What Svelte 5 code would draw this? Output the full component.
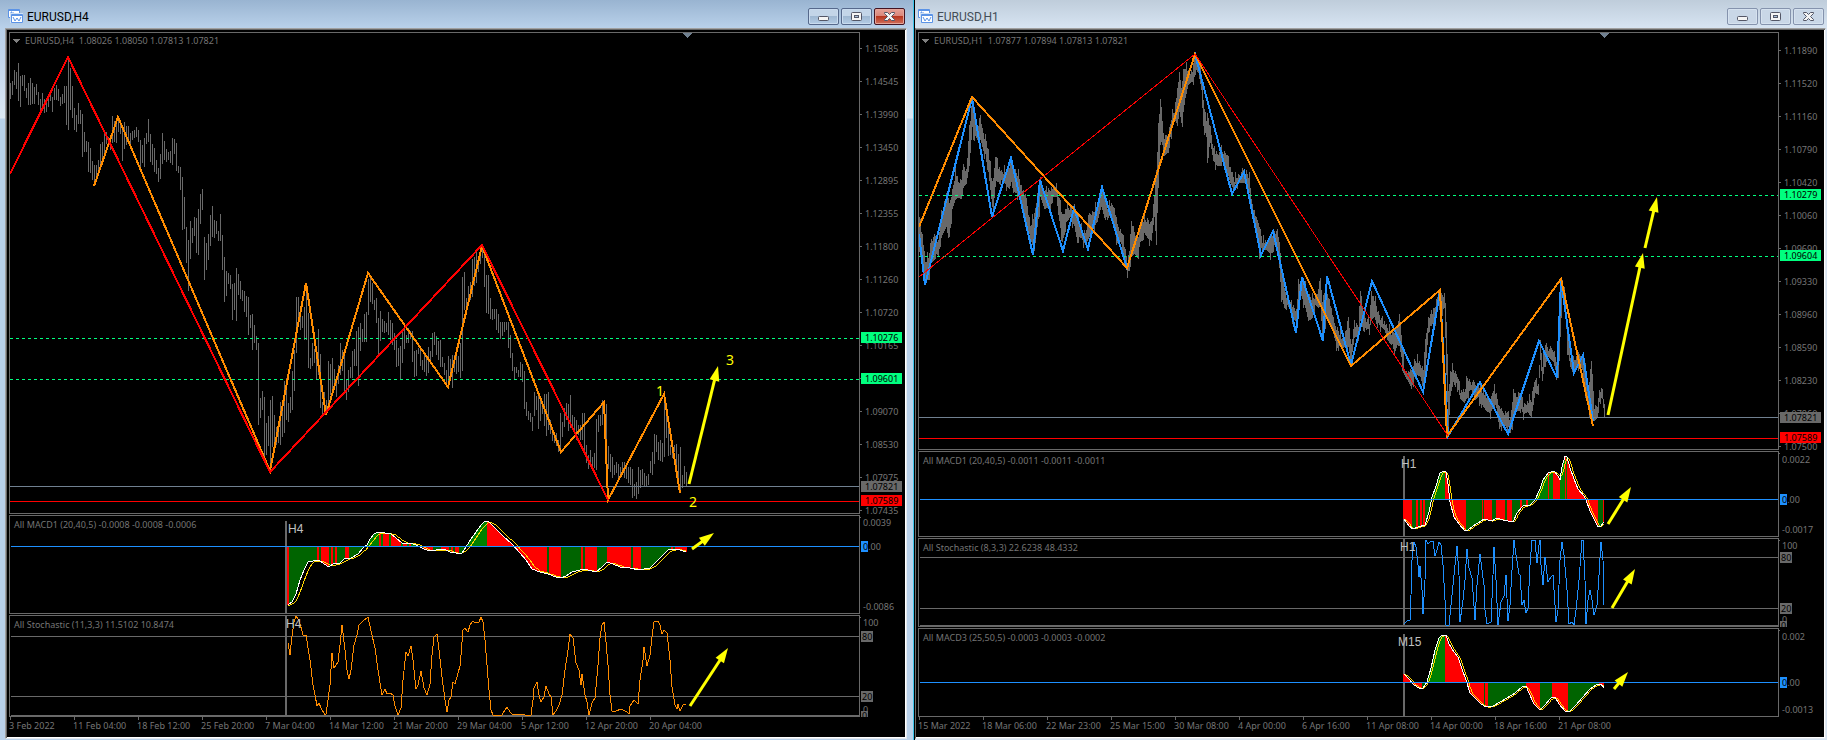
<script lang="ts">
  type Point = [number, number]
  type Level = { y: number; kind: 'target' | 'bid' | 'stop'; boxY: number; text: string }
  type Arrow = [number, number, number, number]

  const DIM = '#696969'
  const ORANGE = '#ff8c00'
  const BLUE = '#1e90ff'

  const nums = (s: string) => s.trim().split(/[\s,]+/).map(Number)

  const pairs = (s: string): Point[] => {
    const n = nums(s)
    const out: Point[] = []
    for (let i = 0; i < n.length; i += 2) out.push([n[i], n[i + 1]])
    return out
  }

  const join = (pts: Point[]) => pts.map(p => p.join(',')).join(' ')

  // value of a polyline at x
  const valueAt = (pts: Point[], x: number) => {
    if (x <= pts[0][0]) return pts[0][1]
    for (let i = 1; i < pts.length; i++) {
      const [x1, y1] = pts[i]
      const [x0, y0] = pts[i - 1]
      if (x <= x1) return y0 + ((y1 - y0) * (x - x0)) / (x1 - x0)
    }
    return pts[pts.length - 1][1]
  }

  const bar = (x: number, top: number, bottom: number, w = 1) =>
    `M${x} ${top}h${w}V${bottom}h${-w}z`

  // H4 ranges, one high/low pair for every second pixel
  const h4Ranges = pairs(`
    83,99 81,95 70,85 72,89 63,101 76,107 75,86 75,91 88,98 83,105 78,105 83,104 87,104 84,95 92,105
    99,115 93,110 99,113 98,112 96,107 93,101 97,112 88,100 85,100 89,101 97,106 94,104 86,103 86,125 59,130
    68,110 86,118 108,130 115,132 103,124 110,124 114,157 132,152 141,152 142,172 148,173 161,180 165,185 165,182 160,174
    144,168 142,162 133,159 132,144 137,146 135,150 116,143 121,142 120,143 117,132 122,134 125,161 122,149 126,145 126,142
    133,144 131,140 130,138 127,137 130,142 140,167 145,163 138,167 133,144 119,142 134,162 144,165 148,172 160,174 168,182
    154,179 133,164 141,160 149,162 152,160 151,163 138,165 139,154 143,171 166,173 167,190 177,230 197,229 227,263 240,291
    221,259 228,243 217,236 218,253 209,255 194,224 189,210 237,280 243,270 234,260 215,246 206,237 220,238 221,234 231,241
    214,241 235,270 257,302 271,296 273,284 275,289 284,320 283,310 268,321 274,295 281,299 290,301 291,312 296,317 297,335
    315,328 314,350 325,343 336,350 343,425 398,418 391,410 397,463 423,455 416,446 400,470 396,447 415,445 427,445 424,443
    402,445 400,437 381,433 378,420 403,422 397,413 371,410 350,391 297,353 297,318 308,330 316,328 307,340 290,340 313,368
    358,369 343,366 349,363 353,380 329,375 354,408 402,415 392,415 400,415 361,405 364,395 358,392 369,385 378,397 365,384
    343,375 350,371 354,393 379,400 370,392 367,378 351,378 349,366 331,366 327,386 323,351 329,342 314,342 312,342 279,315
    277,302 283,304 300,310 298,323 318,354 311,341 319,332 321,333 323,332 312,335 320,340 323,345 333,350 340,367 348,366
    346,379 330,363 328,349 335,343 328,343 331,339 331,362 351,377 350,376 348,354 350,366 360,370 355,372 357,376 347,373
    351,362 333,357 332,345 336,355 341,360 340,367 357,367 363,375 370,384 356,384 359,380 355,388 355,372 350,374 356,372
    343,378 277,371 272,310 298,306 286,302 282,300 259,297 257,286 252,283 260,272 245,264 244,258 248,287 275,313 275,314
    298,319 309,320 309,319 309,330 314,333 322,339 322,336 322,332 322,330 322,348 335,358 353,371 367,380 367,373 370,377
    362,377 364,382 371,409 402,416 411,420 413,422 417,431 392,416 396,410 394,429 398,421 402,414 394,426 394,436 392,430
    420,434 430,441 436,443 433,446 440,452 413,452 422,437 408,427 403,420 404,431 395,428 415,427 417,430 420,440 425,435
    425,440 413,440 413,455 445,463 455,469 450,464 457,469 453,468 419,470 415,432 415,426 400,425 402,428 404,440 446,469
    454,472 457,478 465,475 462,473 464,478 467,474 462,475 462,478 466,479 467,483 467,485 469,498 484,496 482,499 467,494
    470,488 469,485 473,487 476,486 474,485 461,473 452,475 434,464 435,452 442,460 440,461 443,462 395,457 412,438 420,456
    445,455 448,458 445,452 444,475 454,488 447,490 475,488 466,484 472,487`)

  const h4Bars = h4Ranges.map(([hi, lo], i) => bar(10 + i * 2, hi, lo)).join('')

  // H1 envelope: x, high, low
  const h1Env = nums(`
    919 218 250 922 235 262 925 262 284 928 258 280 931 238 262 935 238 256 938 242 258 940 222 242 943 205 232 946 195 225
    949 205 240 952 190 210 955 172 200 958 182 196 961 180 196 963 165 190 966 170 185 969 130 165 972 97 125 974 120 138
    977 130 142 980 115 140 983 138 150 985 135 152 988 150 175 991 178 200 993 180 215 995 155 180 998 166 180 1001 172 183
    1005 172 185 1009 165 188 1011 160 180 1014 170 195 1018 175 195 1022 190 208 1026 200 225 1030 225 240 1034 215 250
    1037 195 225 1040 178 200 1044 193 210 1048 190 206 1052 188 200 1056 185 198 1058 195 215 1062 215 240 1066 208 225
    1070 208 218 1074 208 225 1077 215 240 1081 230 240 1085 232 245 1089 215 235 1093 212 230 1097 205 222 1101 188 205
    1104 195 215 1107 208 222 1110 205 215 1113 205 225 1117 225 240 1121 232 245 1124 245 265 1127 262 270 1129 250 268
    1131 222 260 1134 232 255 1137 240 258 1140 225 240 1144 220 236 1148 220 240 1151 225 240 1154 195 215 1156 170 242
    1158 130 190 1160 97 140 1162 120 145 1164 140 155 1168 135 150 1171 118 135 1174 110 120 1177 90 125 1179 75 110
    1181 88 120 1183 70 115 1185 66 100 1188 72 85 1192 72 80 1195 53 72 1198 60 75 1201 72 90 1203 100 125 1206 120 135
    1207 115 160 1210 128 145 1213 150 162 1217 153 165 1222 152 162 1226 153 170 1230 168 182 1234 180 188 1238 175 184
    1242 172 182 1246 172 180 1249 178 195 1252 205 220 1256 220 235 1259 225 250 1262 240 252 1266 243 250 1270 238 252
    1274 232 248 1278 235 255 1281 262 295 1284 290 306 1288 303 308 1292 305 318 1296 310 320 1298 286 310 1301 280 298
    1305 285 308 1308 295 320 1312 300 315 1315 295 307 1318 290 308 1320 280 305 1322 300 335 1325 290 320 1328 295 325
    1331 310 325 1334 325 337 1338 330 348 1342 340 350 1346 330 345 1348 318 345 1351 345 362 1354 325 340 1358 325 335
    1360 290 320 1363 315 328 1366 320 332 1369 322 330 1371 290 320 1374 300 315 1377 310 325 1380 318 328 1384 322 330
    1387 328 338 1391 333 342 1394 330 355 1397 330 345 1399 312 345 1401 335 355 1404 370 378 1408 373 383 1411 372 388
    1414 360 375 1417 360 378 1420 365 378 1423 370 390 1425 340 370 1428 318 330 1431 315 328 1435 305 320 1438 292 305
    1441 295 315 1444 295 310 1446 320 370 1448 390 435 1450 372 395 1453 370 380 1457 375 388 1460 390 400 1464 392 402
    1467 378 395 1471 382 392 1475 385 400 1478 385 395 1482 390 408 1486 398 412 1490 402 412 1493 388 405 1496 395 410
    1499 408 430 1502 412 422 1506 412 425 1510 420 435 1513 390 420 1516 398 410 1519 393 408 1523 405 416 1527 402 412
    1531 400 415 1534 380 395 1538 385 396 1540 342 360 1542 365 380 1545 343 358 1549 350 360 1553 350 362 1556 360 372
    1558 350 375 1560 300 340 1562 282 300 1565 295 310 1567 330 348 1570 355 365 1574 360 372 1578 355 365 1582 355 368
    1585 368 395 1588 390 410 1591 360 420 1594 408 420 1597 405 415 1600 390 400 1602 388 400 1604 405 418`)

  const highs: Point[] = []
  const lows: Point[] = []
  for (let i = 0; i < h1Env.length; i += 3) {
    highs.push([h1Env[i], h1Env[i + 1]])
    lows.push([h1Env[i], h1Env[i + 2]])
  }

  let h1Bars = ''
  for (let x = 919; x <= 1604; x++) {
    const a = ((x * 37) % 11) - 5
    const b = ((x * 53) % 13) - 6
    const wick = x % 7 === 3 ? 5 : 0
    const tail = x % 11 === 5 ? 6 : 0
    const hi = Math.round(valueAt(highs, x) + a / 2) - wick
    const lo = Math.max(hi + 4, Math.round(valueAt(lows, x) + b / 2)) + tail
    h1Bars += bar(x, Math.max(hi, 53), Math.min(lo, 436))
  }

  // histogram with the falling stretches in red, plus a 5 bar signal line
  function macd(line: string, zero: number, step: number, reds: string) {
    const main = pairs(line)
    const red = pairs(reds)
    const end = main[main.length - 1][0]
    const out = { main: join(main), signal: '', red: '', up: '', down: '' }
    const signal: Point[] = []
    for (let x = main[0][0]; x <= end; x += step) {
      const y = Math.round(valueAt(main, x))
      const path = bar(x - 1, Math.min(y, zero), Math.max(y, zero), step)
      if (red.some(([a, b]) => x >= a && x < b)) out.red += path
      else if (y < zero) out.up += path
      else out.down += path
      let sum = 0
      for (let k = 0; k < 5; k++) sum += valueAt(main, x - k * step)
      signal.push([x, Math.round(sum / 5)])
    }
    out.signal = join(signal)
    return out
  }

  const h4Macd = macd(
    `288,605 292,602 296,594 300,580 304,570 308,562 313,561 319,560 324,564 329,567 333,564 340,563 344,559 351,558
    358,554 363,548 367,545 370,539 374,534 378,532 385,533 391,534 396,538 402,543 411,543 418,546 424,549 430,551
    436,550 444,549 450,552 456,553 462,553 466,547 471,539 476,532 481,525 485,521 489,522 495,528 503,536 512,544
    520,553 526,560 532,569 540,572 548,574 556,577 561,578 566,576 572,572 584,569 596,572 602,567 607,562 613,564
    620,567 630,568 639,570 650,568 656,562 662,556 668,550 676,549 680,550 686,552`,
    546,
    2,
    `286,289 317,319 321,329 331,333 335,337 345,349 379,381 383,389 391,402 404,407 409,412 423,433 441,449 451,453
    455,460 488,547 549,562 581,583 585,597 607,631 633,642 671,673 676,689`
  )

  const h1Macd = macd(
    `1404,519 1409,526 1413,529 1418,527 1425,525 1429,512 1432,497 1436,486 1440,473 1444,471 1446,472 1448,484
    1450,502 1454,517 1459,524 1465,531 1468,530 1473,526 1478,523 1484,519 1492,521 1497,518 1503,520 1508,521
    1513,522 1517,513 1523,506 1530,505 1535,500 1540,489 1543,480 1548,473 1554,471 1558,476 1560,480 1562,467
    1565,456 1567,457 1570,468 1574,479 1578,489 1584,496 1586,500 1590,511 1595,521 1598,527 1601,526 1604,522`,
    499,
    1,
    `1404,1413 1417,1419 1421,1423 1424,1426 1446,1467 1483,1484 1485,1493 1497,1506 1508,1513 1521,1523 1527,1529
    1549,1550 1554,1561 1566,1567 1568,1599 1604,1606`
  )

  const m15Macd = macd(
    `1404,674 1409,679 1414,685 1419,688 1423,688 1427,682 1431,668 1435,650 1439,638 1442,635 1446,635 1449,644
    1454,652 1458,657 1462,669 1466,680 1470,693 1475,698 1481,704 1486,707 1493,706 1500,702 1507,698 1515,693
    1522,687 1526,686 1529,693 1534,704 1540,710 1545,705 1551,698 1555,697 1559,704 1565,711 1570,711 1576,705
    1583,697 1590,689 1596,685 1601,684 1604,688`,
    682,
    1,
    '1404,1412 1414,1423 1446,1485 1486,1489 1527,1541 1553,1569 1600,1606'
  )

  const h4Stoch = `288,643 290,655 292,636 294,622 296,616 299,620 303,635 306,635 310,660 313,685 315,695 317,706 319,703
    321,708 325,715 326,714 328,700 330,685 332,653 334,668 338,662 340,645 342,625 345,650 347,670 349,679 351,670
    354,645 357,635 359,625 363,621 368,617 371,631 375,648 378,670 382,695 385,689 387,694 390,693 393,695 395,706
    398,715 401,708 403,680 406,652 408,656 411,646 413,660 416,689 418,685 421,671 424,688 427,695 430,684 432,655
    434,637 437,634 439,650 442,677 445,700 447,712 449,700 451,697 453,682 455,684 458,673 460,666 461,655 463,630
    465,628 468,632 470,625 473,621 475,623 479,622 481,617 483,622 485,640 487,665 489,690 491,710 493,715 502,715
    505,710 507,707 510,712 513,715 521,714 525,715 531,715 533,700 534,688 537,682 539,695 541,702 544,697 546,686
    549,694 551,697 553,715 556,711 559,705 562,695 565,670 568,650 570,634 573,638 576,663 579,670 581,685 582,674
    585,695 587,702 589,715 592,703 595,698 598,665 600,638 602,625 604,622 606,642 608,665 610,695 612,711 616,711
    621,709 627,712 629,714 630,706 634,700 638,704 640,680 643,660 644,647 647,666 650,655 652,637 654,622 658,621
    660,625 662,634 664,630 667,633 670,660 672,687 675,705 677,709 678,704 680,711 683,705 686,704`

  const h1Stoch = `1404,624 1407,621 1410,620 1411,595 1412,560 1414,542 1416,547 1418,565 1419,577 1420,566 1422,590
    1423,614 1425,580 1426,540 1428,544 1431,541 1433,541 1435,556 1437,550 1439,542 1441,545 1443,565 1445,600
    1446,625 1449,625 1451,605 1454,575 1457,546 1459,575 1460,622 1463,600 1465,580 1467,549 1469,568 1472,578
    1475,620 1477,585 1480,554 1482,570 1484,585 1485,610 1487,624 1491,622 1493,575 1494,547 1496,580 1498,625
    1501,602 1504,596 1506,575 1508,621 1510,605 1512,570 1514,540 1516,555 1519,574 1520,575 1522,605 1524,600
    1526,613 1528,608 1530,565 1532,540 1535,540 1537,563 1539,545 1540,540 1541,565 1543,585 1545,557 1548,582
    1551,577 1553,575 1555,605 1556,622 1558,610 1560,560 1562,542 1564,555 1567,590 1569,624 1572,622 1574,625
    1576,610 1579,580 1582,540 1583,540 1585,580 1586,624 1588,600 1590,590 1592,600 1594,615 1597,605 1599,575
    1601,542 1603,560 1604,605`

  const windows = [
    {
      title: 'EURUSD,H4',
      active: true,
      ohlc: '1.08026 1.08050 1.07813 1.07821',
      left: 10,
      shift: 687,
      dates: [
        '3 Feb 2022', '11 Feb 04:00', '18 Feb 12:00', '25 Feb 20:00', '7 Mar 04:00', '14 Mar 12:00',
        '21 Mar 20:00', '29 Mar 04:00', '5 Apr 12:00', '12 Apr 20:00', '20 Apr 04:00',
      ],
      price: {
        top: 32,
        height: 482,
        firstTick: 48,
        ticks: [
          '1.15085', '1.14545', '1.13990', '1.13450', '1.12895', '1.12355', '1.11800', '1.11260',
          '1.10720', '1.10165', '', '1.09070', '1.08530', '1.07975', '1.07435',
        ],
        bars: h4Bars,
        zigzags: [
          {
            color: ORANGE,
            width: 2,
            points: `94,186 118,117 270,471 306,283 326,415 368,273 448,387 482,246 561,452 604,402 608,500 664,394 680,493`,
          },
          { color: '#f00', width: 2, points: '10,174 68,57 270,472 482,245 608,500' },
        ],
        levels: [
          { y: 338, kind: 'target', boxY: 332, text: '1.10276' },
          { y: 379, kind: 'target', boxY: 373, text: '1.09601' },
          { y: 486, kind: 'bid', boxY: 481, text: '1.07821' },
          { y: 501, kind: 'stop', boxY: 495, text: '1.07589' },
        ] as Level[],
        arrows: [[689, 484, 718, 366]] as Arrow[],
        waves: [
          { n: 1, x: 656, y: 396 },
          { n: 2, x: 689, y: 507 },
          { n: 3, x: 726, y: 365 },
        ],
      },
      indicators: [
        {
          top: 515, height: 99, label: 'All MACD1 (20,40,5) -0.0008 -0.0008 -0.0006',
          frame: 'H4', frameX: 288, frameY: 533, start: 285, startY: 521,
          macd: h4Macd, zero: 546, high: ['0.0039', 522], low: ['-0.0086', 607],
          arrow: [692, 549, 714, 533] as Arrow,
        },
        {
          top: 615, height: 102, label: 'All Stochastic (11,3,3) 11.5102 10.8474',
          frame: 'H4', frameX: 286, frameY: 628, start: 285, startY: 616,
          stoch: h4Stoch, color: ORANGE, levels: [636, 696, 715], high: ['100', 622],
          arrow: [690, 706, 728, 648] as Arrow,
        },
      ],
    },
    {
      title: 'EURUSD,H1',
      active: false,
      ohlc: '1.07877 1.07894 1.07813 1.07821',
      left: 919,
      shift: 1604,
      dates: [
        '15 Mar 2022', '18 Mar 06:00', '22 Mar 23:00', '25 Mar 15:00', '30 Mar 08:00', '4 Apr 00:00',
        '6 Apr 16:00', '11 Apr 08:00', '14 Apr 00:00', '18 Apr 16:00', '21 Apr 08:00',
      ],
      price: {
        top: 32,
        height: 418,
        firstTick: 50,
        ticks: [
          '1.11890', '1.11520', '1.11160', '1.10790', '1.10420', '1.10060', '1.09690', '1.09330',
          '1.08960', '1.08590', '1.08230', '1.07860', '1.07500',
        ],
        bars: h1Bars,
        zigzags: [
          {
            color: BLUE,
            width: 2,
            points: `919,234 925,285 972,98 992,217 1011,158 1033,255 1040,180 1063,251 1074,208 1088,249 1102,187
              1127,268 1195,54 1232,194 1244,172 1261,255 1273,231 1296,333 1302,277 1323,341 1327,276 1351,365
              1372,281 1423,392 1440,291 1448,436 1480,382 1508,434 1539,341 1557,378 1561,280 1574,373 1583,355
              1593,421`,
          },
          {
            color: ORANGE,
            width: 2,
            points: `919,227 972,97 1127,268 1195,54 1351,366 1440,290 1447,436 1561,279 1593,426`,
          },
          { color: '#f00', width: 1, points: '919,277 1195,54 1448,436' },
        ],
        levels: [
          { y: 195, kind: 'target', boxY: 189, text: '1.10279' },
          { y: 256, kind: 'target', boxY: 250, text: '1.09604' },
          { y: 417, kind: 'bid', boxY: 412, text: '1.07821' },
          { y: 438, kind: 'stop', boxY: 432, text: '1.07589' },
        ] as Level[],
        arrows: [
          [1608, 415, 1643, 253],
          [1645, 248, 1657, 197],
        ] as Arrow[],
        waves: [],
      },
      indicators: [
        {
          top: 451, height: 86, label: 'All MACD1 (20,40,5) -0.0011 -0.0011 -0.0011',
          frame: 'H1', frameX: 1401, frameY: 468, start: 1403, startY: 456,
          macd: h1Macd, zero: 499, high: ['0.0022', 459], low: ['-0.0017', 530],
          arrow: [1608, 524, 1631, 487] as Arrow,
        },
        {
          top: 538, height: 89, label: 'All Stochastic (8,3,3) 22.6238 48.4332',
          frame: 'H1', frameX: 1400, frameY: 551, start: 1403, startY: 539,
          stoch: h1Stoch, color: BLUE, levels: [557, 608, 625], high: ['100', 545],
          arrow: [1612, 608, 1635, 569] as Arrow,
        },
        {
          top: 628, height: 89, label: 'All MACD3 (25,50,5) -0.0003 -0.0003 -0.0002',
          frame: 'M15', frameX: 1398, frameY: 646, start: 1403, startY: 634,
          macd: m15Macd, zero: 682, high: ['0.002', 636], low: ['-0.0013', 710],
          arrow: [1614, 689, 1628, 672] as Arrow,
        },
      ],
    },
  ]

  // shaft and head of an arrow as two shapes
  function arrowShape([x1, y1, x2, y2]: Arrow) {
    const len = Math.hypot(x2 - x1, y2 - y1)
    const ux = (x2 - x1) / len
    const uy = (y2 - y1) / len
    const bx = x2 - ux * 15
    const by = y2 - uy * 15
    const head = [
      [x2, y2],
      [bx - uy * 5, by + ux * 5],
      [bx + uy * 5, by - ux * 5],
    ]
    return { x1, y1, x2: x2 - ux * 12, y2: y2 - uy * 12, head: head.map(p => p.join(',')).join(' ') }
  }
</script>

{#snippet arrow(a: Arrow)}
  {@const s = arrowShape(a)}
  <line class="shaft" x1={s.x1} y1={s.y1} x2={s.x2} y2={s.y2} />
  <polygon class="head" points={s.head} />
{/snippet}

<main class="workspace">
  {#each windows as w}
    <section class="window" class:active={w.active} aria-label={w.title}>
      <header>
        <svg class="logo" width="15" height="15" viewBox="0 0 15 15" aria-hidden="true">
          <rect x="0" y="0" width="12" height="9" rx="1" fill="#5b93e6" />
          <rect x="1" y="2" width="10" height="6" fill="#fff" />
          <path d="M2 5h1v-2h1v3h1v-2h1" fill="none" stroke="#5b93e6" />
          <rect x="2" y="4" width="13" height="10" fill="#cfe0f5" />
          <rect x="3" y="5" width="12" height="9" rx="1" fill="#5b93e6" />
          <rect x="4" y="7" width="10" height="6" fill="#fff" />
          <path d="M5 8l2 4 2-3 2 3 2-4" fill="none" stroke="#5b93e6" />
        </svg>
        <h1>{w.title}</h1>
        <div class="buttons">
          <button type="button" aria-label="Minimize">
            <svg width="15" height="13" viewBox="0 0 15 13" aria-hidden="true">
              <rect x="2.500" y="6.500" width="10" height="4" rx="1" class="glyph" />
            </svg>
          </button>
          <button type="button" aria-label="Maximize">
            <svg width="15" height="13" viewBox="0 0 15 13" aria-hidden="true">
              <rect x="2.500" y="2.500" width="10" height="8" rx="1" class="glyph" />
              <rect x="5.500" y="5.500" width="4" height="2" class="glyph hole" />
            </svg>
          </button>
          <button type="button" class="close" aria-label="Close">
            <svg width="15" height="13" viewBox="0 0 15 13" aria-hidden="true">
              <path
                class="glyph"
                d="M2.500 2.500h3l2 2 2-2h3v1l-3 3 3 3v1h-3l-2-2-2 2h-3v-1l3-3-3-3z" />
            </svg>
          </button>
        </div>
      </header>

      <div class="client">
        <div class="pane">
          <svg class="plot" height={w.price.height}>
            <g transform="translate({-w.left} {-w.price.top - 1})">
              <path d={w.price.bars} fill={DIM} />
              {#each w.price.levels as l}
                {#if l.kind === 'target'}
                  <line class="target" x1={w.left} x2="300%" y1={l.y + 0.5} y2={l.y + 0.5} />
                {:else}
                  <rect class={l.kind} x={w.left} y={l.y} width="100%" height="1" />
                {/if}
              {/each}
              {#each w.price.zigzags as z}
                <polyline points={z.points} fill="none" stroke={z.color} stroke-width={z.width} />
              {/each}
              <polygon points="{w.shift - 5},33 {w.shift + 5},33 {w.shift},38" fill="#708090" />
              <polygon points="{w.left + 3},39 {w.left + 10},39 {w.left + 6},43" fill="#808080" />
              <text x={w.left + 15} y="44">{w.title}&nbsp; {w.ohlc}</text>
              {#each w.price.arrows as a}
                {@render arrow(a)}
              {/each}
              {#each w.price.waves as wave}
                <text class="wave" x={wave.x} y={wave.y}>{wave.n}</text>
              {/each}
            </g>
          </svg>
          <svg class="scale" height={w.price.height}>
            <g transform="translate(0 {-w.price.top})">
              {#each w.price.ticks as t, i}
                {@const y = w.price.firstTick + i * 33}
                <rect x="0" {y} width="2" height="1" fill={DIM} />
                <text x="5" y={y + 4}>{t}</text>
              {/each}
              {#each w.price.levels as l}
                <rect class={l.kind === 'bid' ? 'dim' : l.kind} x="1" y={l.boxY} width="41" height="11" />
                <text class="on" x="5" y={l.boxY + 9}>{l.text}</text>
              {/each}
            </g>
          </svg>
        </div>

        {#each w.indicators as p}
          <div class="pane">
            <svg class="plot" height={p.height}>
              <g transform="translate({-w.left} {-p.top - 1})">
                <text x={w.left + 4} y={p.top + 13}>{p.label}</text>
                <rect x={p.start} y={p.startY} width="2" height="100%" fill={DIM} />
                {#if p.macd}
                  <path d={p.macd.red} fill="#f00" />
                  <path d={p.macd.up} fill="#008000" />
                  <path d={p.macd.down} fill="#006400" />
                  <polyline class="signal" points={p.macd.signal} />
                  <polyline class="main" points={p.macd.main} />
                  <rect x={w.left + 1} y={p.zero} width="100%" height="1" fill={BLUE} />
                {:else}
                  {#each p.levels as y}
                    <rect x={w.left + 1} {y} width="100%" height="1" fill={DIM} />
                  {/each}
                  <polyline points={p.stoch} fill="none" stroke={p.color} />
                {/if}
                <text class="frame" x={p.frameX} y={p.frameY}>{p.frame}</text>
                {@render arrow(p.arrow)}
              </g>
            </svg>
            <svg class="scale" height={p.height}>
              <g transform="translate(0 {-p.top})">
                <rect x="0" y={p.top + 2} width="1" height="1" fill={DIM} />
                <text x="3" y={Number(p.high[1]) + 4}>{p.high[0]}</text>
                {#if p.macd}
                  <rect x="1" y={p.zero - 5} width="7" height="11" fill={BLUE} />
                  <text x="3" y={p.zero + 4}><tspan class="on">0</tspan>.00</text>
                  <text x="3" y={Number(p.low[1]) + 3}>{p.low[0]}</text>
                {:else}
                  {@const [l80, l20, l0] = p.levels}
                  <rect class="dim" x="1" y={l80 - 5} width="12" height="11" />
                  <text class="on" x="2" y={l80 + 4}>80</text>
                  <rect class="dim" x="1" y={l20 - 5} width="12" height="11" />
                  <text class="on" x="2" y={l20 + 4}>20</text>
                  <text x="3" y={l0 - 2}>0</text>
                  <rect class="dim" x="1" y={l0 - 4} width="7" height="6" />
                  <text class="on" x="2" y={l0 + 4}>0</text>
                {/if}
              </g>
            </svg>
          </div>
        {/each}

        <ol class="dates">
          {#each w.dates as d}
            <li>{d}</li>
          {/each}
        </ol>
      </div>
    </section>
  {/each}
</main>

<style>
  :global(body) {
    margin: 0;
    background: #b9d1ea;
  }

  .workspace {
    display: grid;
    grid-template-columns: 915fr 912fr;
    font-family: 'Noto Sans', 'DejaVu Sans Condensed', sans-serif;
    font-size: 9px;
  }

  .window {
    min-width: 0;
    padding: 0 1px 1px 0;
    background: linear-gradient(#bfcddb, #d7e4f2 28px);
  }

  .window.active {
    padding: 0 7px 1px 5px;
    border-right: 1px solid #000;
    box-shadow: inset -1px 0 #3cc4ea;
    background: linear-gradient(#99b4d1, #b9d1ea 28px, #c3d6ec 60px, #dce9f5 118px, #b9d1ea 119px);
  }

  header {
    display: flex;
    align-items: flex-start;
    height: 28px;
    box-sizing: border-box;
    padding: 8px 2px 0 3px;
  }

  .logo {
    margin-top: 1px;
  }

  h1 {
    flex: 1;
    margin: 0 0 0 4px;
    font: 12px/18px Roboto, sans-serif;
    color: #434d57;
  }

  .active h1 {
    color: #000;
  }

  .buttons {
    display: flex;
    gap: 2px;
  }

  button {
    display: flex;
    align-items: center;
    justify-content: center;
    width: 31px;
    height: 17px;
    padding: 0;
    border: 1px solid #8593ad;
    border-radius: 2px;
    background: #c9d7e7;
    box-shadow: inset 0 0 0 1px #d6e2ef;
  }

  .active button {
    border-color: #56698c;
    background: linear-gradient(#c3d5e8 50%, #9fb8d2 50%, #b4cce5);
    box-shadow: inset 0 0 0 1px #cadcef;
  }

  .active .close {
    border-color: #431422;
    background: linear-gradient(#e6a197, #d98478 50%, #b8361f 50%, #d0705c);
    box-shadow: inset 0 0 0 1px #e4a59a;
  }

  .glyph {
    fill: #f4f4f4;
    stroke: #535666;
  }

  .hole {
    fill: #a9bfd8;
  }

  .client {
    padding: 3px 1px 1px 2px;
    border: 1px solid #696969;
    border-top-color: #a0a0a0;
    border-right-color: #e3e9f0;
    border-bottom-color: #e3e9f0;
    background: #000;
    box-shadow: inset 0 1px #696969, inset -1px -1px #fff;
  }

  .active .client {
    padding-left: 3px;
    border-left-color: #a0a0a0;
    box-shadow: inset 1px 1px #696969, inset -1px -1px #fff;
  }

  .pane {
    display: flex;
    margin-bottom: 1px;
  }

  .pane:nth-last-child(2) {
    margin-bottom: 0;
  }

  svg {
    display: block;
    flex: none;
  }

  .plot {
    flex: 1;
    min-width: 0;
    box-sizing: border-box;
    border: 1px solid #696969;
    shape-rendering: crispEdges;
  }

  .scale {
    width: 45px;
    overflow: visible;
    shape-rendering: crispEdges;
  }

  text {
    fill: #757575;
  }

  .on {
    fill: #000;
  }

  .frame {
    font: 12px 'Liberation Sans', Arial, sans-serif;
    fill: #c0c0c0;
  }

  .wave {
    font-size: 14px;
    fill: #ff0;
  }

  .target {
    stroke: #00ff7f;
    stroke-dasharray: 3 3;
  }

  rect.target {
    fill: #00ff7f;
    stroke: none;
  }

  .bid {
    fill: #708090;
  }

  .stop {
    fill: #f00;
  }

  .dim {
    fill: #696969;
  }

  .main,
  .signal {
    fill: none;
    stroke: #fff;
  }

  .signal {
    stroke: #ffd700;
  }

  .shaft {
    stroke: #ff0;
    stroke-width: 3;
    shape-rendering: auto;
  }

  .head {
    fill: #ff0;
    shape-rendering: auto;
  }

  .dates {
    display: flex;
    height: 20px;
    margin: 0;
    padding: 0;
    list-style: none;
    color: #757575;
    line-height: 12px;
    overflow: hidden;
  }

  li {
    flex: 0 0 64px;
    white-space: nowrap;
  }

  li::before {
    content: '';
    display: block;
    width: 1px;
    height: 3px;
    margin-left: 1px;
    background: #696969;
  }
</style>
